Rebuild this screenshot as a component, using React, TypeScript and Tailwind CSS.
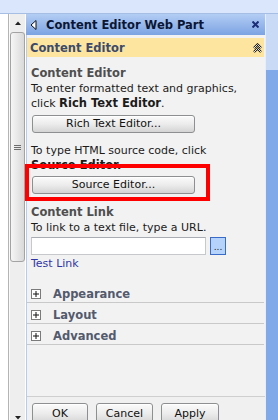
import React from 'react';

function Btn({ children, className }: { children: React.ReactNode; className?: string }) {
  return (
    <div
      className={`flex items-center justify-center rounded-[3px] border border-[#8d8f91] bg-gradient-to-b from-[#fbfbfb] via-[#ececec] to-[#d4d4d4] text-[#111] shadow-[inset_0_1px_0_#ffffff] ${className ?? ''}`}
    >
      {children}
    </div>
  );
}

function PlusBox() {
  return (
    <div className="flex h-[10px] w-[10px] items-center justify-center border border-[#7b7b7b] bg-white">
      <svg width="6" height="6" viewBox="0 0 6 6">
        <path d="M0 3h6M3 0v6" stroke="#111" strokeWidth="1" />
      </svg>
    </div>
  );
}

function Section({ label }: { label: string }) {
  return (
    <div className="flex h-[21px] items-start gap-[12px] border-b border-[#c9c9c9] pl-[4px] pt-[7px]">
      <PlusBox />
      <span className="-mt-[2px] text-[11.5px] font-bold text-[#535a6d]">{label}</span>
    </div>
  );
}

function ScrollBar() {
  return (
    <div className="flex w-[16px] flex-col border-l border-[#fafafa] bg-[#eeeeee]">
      <div className="flex h-[18px] items-center justify-center">
        <svg width="6" height="4" viewBox="0 0 6 4">
          <path d="M0 4L3 0.5L6 4Z" fill="#222" />
        </svg>
      </div>
      <div className="flex h-[230px] items-center justify-center rounded-[3px] border border-[#a3a3a3] bg-gradient-to-r from-[#f6f6f6] to-[#d9d9d9]">
        <div className="flex flex-col gap-[1px]">
          <div className="h-[1px] w-[7px] bg-[#6d6d6d]" />
          <div className="h-[1px] w-[7px] bg-[#6d6d6d]" />
          <div className="h-[1px] w-[7px] bg-[#6d6d6d]" />
        </div>
      </div>
      <div className="flex-1" />
      <div className="flex h-[4px] justify-center">
        <svg width="6" height="4" viewBox="0 0 6 4">
          <path d="M0 0L3 3.5L6 0Z" fill="#222" />
        </svg>
      </div>
    </div>
  );
}

export default function App() {
  return (
    <div className="relative flex h-[420px] w-[278px] flex-col overflow-hidden bg-[#d3e2f8] font-['DejaVu_Sans',Verdana,sans-serif] text-[11px] leading-[14px] text-[#1b1b1b]">
      <div className="h-[14px] shrink-0 border-b border-[#a6bee4] bg-[#d9e6fb]" />
      <div className="flex min-h-0 flex-1">
        <div className="w-[9px] border-r border-[#b4b4b4] bg-white" />
        <ScrollBar />
        <div className="w-[1px] bg-white" />

        {/* tool pane */}
        <div className="flex min-w-0 flex-1">
          <div className="flex w-[240px] flex-col border-r border-[#e6eefb]">
            <div className="flex h-[21px] shrink-0 items-center bg-gradient-to-b from-[#b3cdf4] to-[#7ca3e2] pl-[4px] pr-[6px] text-[#0b1634]">
              <svg width="7" height="10" viewBox="0 0 7 10">
                <path d="M6 0.5V9.5L1 5Z" fill="#fff" stroke="#111" strokeWidth="1" />
              </svg>
              <span className="ml-[9px] text-[11.5px] font-bold">Content Editor Web Part</span>
              <div className="flex-1" />
              <svg width="7" height="7" viewBox="0 0 7 7">
                <path d="M0.5 0.5L6.5 6.5M6.5 0.5L0.5 6.5" stroke="#1c2e78" strokeWidth="2" />
              </svg>
            </div>

            <div className="flex min-h-0 flex-1 flex-col border-l border-[#b6ccee] bg-[#f2f2f2]">
              <div className="mr-[1px] mt-[3px] flex h-[19px] shrink-0 items-center bg-[#fde59f] pl-[3px] pr-[2px]">
                <span className="text-[11.5px] font-bold text-[#3b4a6b]">Content Editor</span>
                <div className="flex-1" />
                <svg width="9" height="10" viewBox="0 0 9 10">
                  <path d="M1 5L4.5 1.5L8 5M1 9L4.5 5.5L8 9" fill="none" stroke="#111" strokeWidth="2.2" />
                  <path d="M1 5L4.5 1.5L8 5M1 9L4.5 5.5L8 9" fill="none" stroke="#fff" strokeWidth="0.9" />
                </svg>
              </div>

              <div className="flex flex-1 flex-col border-b border-[#cfcfcf]">
                <div className="flex flex-col pl-[4px]">
                  <div className="mt-[9px] text-[11.5px] font-bold text-[#4f4f4f]">Content Editor</div>
                  <div className="mt-[2px]">To enter formatted text and graphics,</div>
                  <div>
                    click <b className="text-[11.5px]">Rich Text Editor</b>.
                  </div>
                  <Btn className="ml-[1px] mt-[4px] h-[18px] w-[163px]">Rich Text Editor...</Btn>
                  <div className="mt-[11px]">To type HTML source code, click</div>
                  <div className="text-[11.5px] font-bold">Source Editor.</div>
                  <Btn className="ml-[1px] mt-[4px] h-[18px] w-[163px]">Source Editor...</Btn>
                  <div className="mt-[11px] text-[11.5px] font-bold text-[#4f4f4f]">Content Link</div>
                  <div className="mt-[2px]">To link to a text file, type a URL.</div>
                  <div className="mt-[2px] flex h-[18px] items-stretch gap-[4px]">
                    <div className="w-[175px] border border-[#c6c8cc] border-t-[#a9adb3] bg-white" />
                    <div className="flex w-[16px] items-end justify-center border border-[#3b6bc8] bg-[#b5d3fb] pb-[2px] text-[9px] leading-[9px] text-[#222]">
                      ...
                    </div>
                  </div>
                  <div className="mt-[2px] text-[#2f36a6]">Test Link</div>
                </div>
                <div className="mr-[1px] mt-[11px] flex flex-col">
                  <Section label="Appearance" />
                  <Section label="Layout" />
                  <Section label="Advanced" />
                </div>
              </div>

              <div className="flex h-[23px] shrink-0 gap-[8px] bg-[#f0f0f0] pl-[5px] pt-[6px]">
                <Btn className="h-[21px] w-[56px] border-[#3c7fb1]">OK</Btn>
                <Btn className="h-[21px] w-[57px]">Cancel</Btn>
                <Btn className="h-[21px] w-[58px]">Apply</Btn>
              </div>
            </div>
          </div>

          <div className="flex flex-1 flex-col">
            <div className="h-[56px] bg-[#c8daf6]" />
            <div className="flex-1 bg-[#80a9e9]" />
          </div>
        </div>
      </div>

      <div className="absolute left-[25px] top-[164px] h-[37px] w-[185px] border-4 border-[#ff0000]" />
    </div>
  );
}
